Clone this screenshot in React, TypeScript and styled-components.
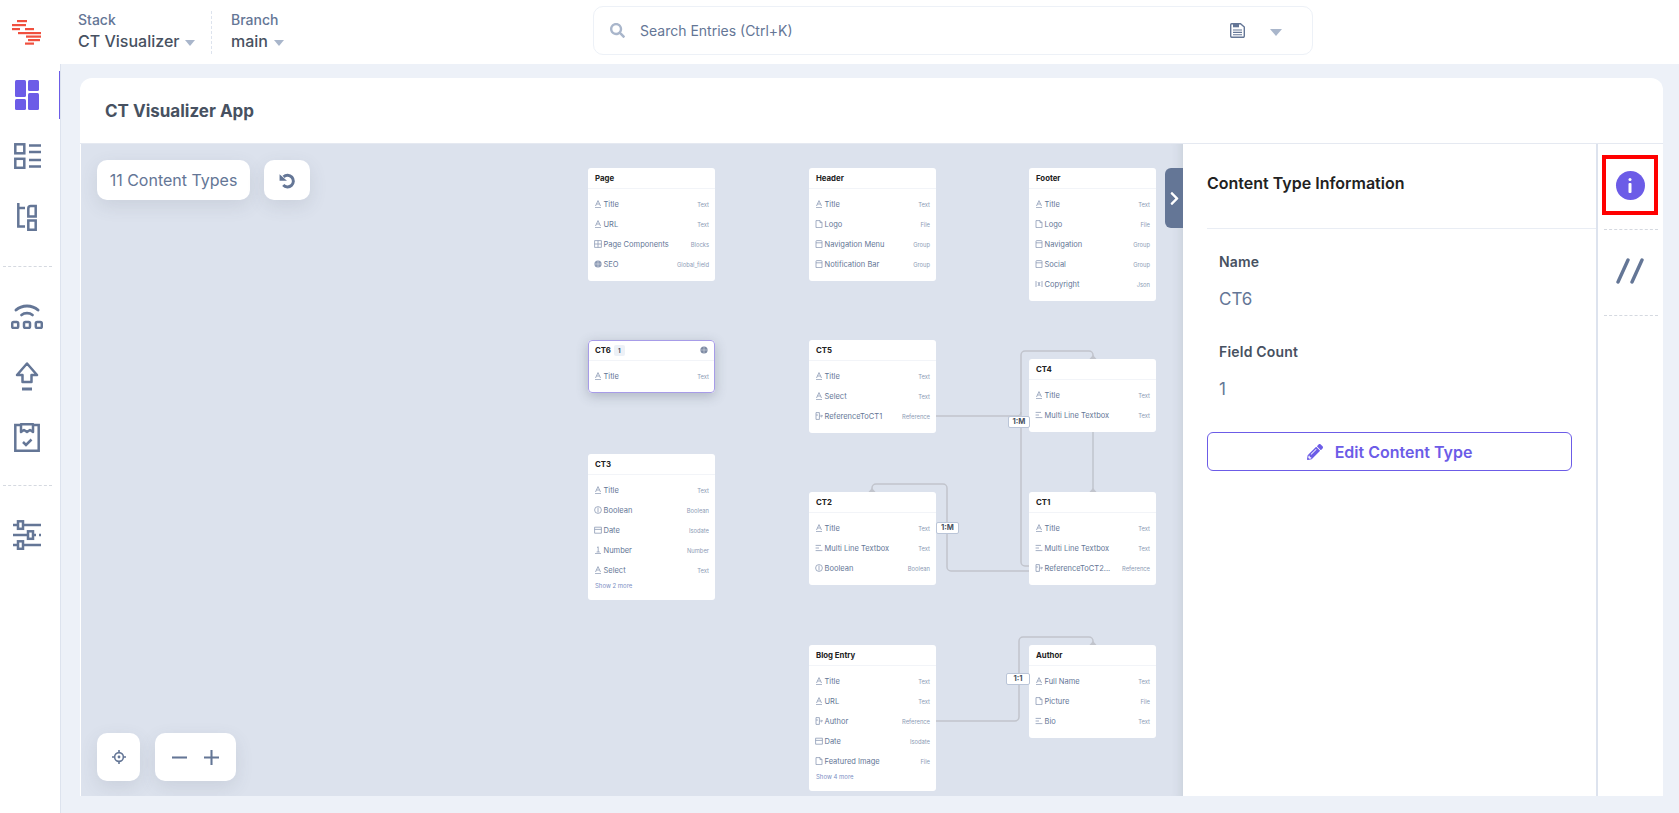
import React from "react";
import styled, { createGlobalStyle } from "styled-components";
import { FaSearch, FaPencilAlt, FaChevronRight } from "react-icons/fa";

const slate = "#647696";
const ink = "#475161";
const purple = "#6C5CE7";

const GlobalStyle = createGlobalStyle`
  html, body { margin: 0; padding: 0; height: 100%; overflow: hidden; }
  body { font-family: Inter, "Liberation Sans", sans-serif; background: #edf1f8; color: ${ink}; }
  #root { height: 100%; }
  * { box-sizing: border-box; }
`;

const Shell = styled.div`
  display: flex;
  flex-direction: column;
  width: 1679px;
  height: 813px;
`;

const TopBar = styled.header`
  display: flex;
  align-items: center;
  height: 64px;
  flex: none;
  background: #fff;
  position: relative;
`;

const LogoCell = styled.div`
  width: 78px;
  flex: none;
  padding-left: 12px;
  display: flex;
  align-items: center;
`;

const Picker = styled.div<{ $width: number }>`
  width: ${(p) => p.$width}px;
  flex: none;
  height: 43px;
  padding-bottom: 2px;
  display: flex;
  flex-direction: column;
  justify-content: center;
  gap: 3px;
`;

const PickerLabel = styled.span`
  font-size: 14px;
  line-height: 17px;
  font-weight: 500;
  color: ${slate};
`;

const PickerValue = styled.span`
  font-size: 16px;
  line-height: 20px;
  font-weight: 500;
  color: ${ink};
  display: flex;
  align-items: center;
  gap: 6px;
`;

const Caret = styled.i<{ $size?: number }>`
  display: inline-block;
  width: 0;
  height: 0;
  margin-top: 4px;
  border-left: ${(p) => p.$size ?? 5}px solid transparent;
  border-right: ${(p) => p.$size ?? 5}px solid transparent;
  border-top: ${(p) => (p.$size ?? 5) + 1}px solid #a9b6cb;
`;

const PickerRule = styled.div`
  width: 0;
  height: 43px;
  flex: none;
  border-left: 1px dashed #dde3ee;
  margin-right: 19px;
  margin-left: -1px;
`;

const SearchBox = styled.div`
  position: absolute;
  left: 593px;
  top: 6px;
  width: 720px;
  height: 49px;
  border: 1px solid #edf1f7;
  border-radius: 10px;
  display: flex;
  align-items: center;
  padding: 0 16px;
  color: #a9b6cb;
`;

const SearchText = styled.span`
  margin-left: 15px;
  font-size: 14px;
  color: ${slate};
  flex: 1;
`;

const SearchActions = styled.div`
  display: flex;
  align-items: center;
  gap: 25px;
  margin-right: 14px;
`;

const Body = styled.div`
  flex: 1;
  display: flex;
  min-height: 0;
`;

const Sidebar = styled.nav`
  width: 61px;
  flex: none;
  background: #fff;
  border-right: 1px solid #dde3ee;
  position: relative;
`;

const NavSlot = styled.div<{ $active?: boolean }>`
  height: 61px;
  display: flex;
  align-items: center;
  justify-content: center;
  width: 54px;
  position: relative;
  color: ${slate};
  ${(p) =>
    p.$active &&
    `&::after {
      content: "";
      position: absolute;
      right: -6px;
      top: 7px;
      height: 48px;
      width: 1px;
      background: ${purple};
    }`}
`;

const NavRule = styled.div<{ $top: number; $bottom: number }>`
  border-top: 1px dashed #d5d9e0;
  margin: ${(p) => p.$top}px 8px ${(p) => p.$bottom}px 3px;
`;

const Main = styled.main`
  flex: 1;
  padding: 14px 16px 17px 19px;
  min-width: 0;
`;

const Card = styled.section`
  height: 100%;
  background: #fff;
  border-radius: 12px 12px 0 0;
  display: flex;
  flex-direction: column;
  overflow: hidden;
`;

const CardTitle = styled.h1`
  margin: 0;
  height: 66px;
  flex: none;
  display: flex;
  align-items: center;
  padding-left: 25px;
  font-size: 17px;
  font-weight: 700;
  color: ${ink};
  border-bottom: 1px solid #e5e9f1;
`;

const Workspace = styled.div`
  flex: 1;
  display: flex;
  min-height: 0;
`;

const Canvas = styled.div`
  position: relative;
  flex: 1;
  margin-left: 1px;
  background: #dce2ed;
  box-shadow: inset -12px 0 12px -12px rgba(71, 81, 97, 0.18);
`;

const FloatBar = styled.div<{ $place: "top" | "bottom" }>`
  position: absolute;
  left: 16px;
  ${(p) => (p.$place === "top" ? "top: 16px;" : "bottom: 15px;")}
  display: flex;
  gap: ${(p) => (p.$place === "top" ? 14 : 15)}px;
`;

const FloatChip = styled.div<{ $width: number; $height: number }>`
  width: ${(p) => p.$width}px;
  height: ${(p) => p.$height}px;
  background: #fff;
  border-radius: 10px;
  display: flex;
  align-items: center;
  justify-content: space-evenly;
  font-size: 16px;
  color: ${slate};
  box-shadow: 0 6px 18px rgba(71, 81, 97, 0.12);
`;

const EdgeLayer = styled.svg`
  position: absolute;
  left: 0;
  top: 0;
  pointer-events: none;
`;

const EdgeTag = styled.div<{ $x: number; $y: number; $w: number }>`
  position: absolute;
  left: ${(p) => p.$x}px;
  top: ${(p) => p.$y}px;
  width: ${(p) => p.$w}px;
  height: 12px;
  background: #fff;
  border: 1px solid #bac5d8;
  border-radius: 2px;
  font-size: 7.6px;
  font-weight: 700;
  line-height: 10px;
  text-align: center;
  color: ${ink};
`;

const NodeCard = styled.div<{ $x: number; $y: number; $selected?: boolean }>`
  position: absolute;
  left: ${(p) => p.$x}px;
  top: ${(p) => p.$y}px;
  width: 127px;
  background: #fff;
  border-radius: 3px;
  padding-bottom: 7px;
  ${(p) =>
    p.$selected
      ? `outline: 1px solid #a79ce8; outline-offset: -1px; box-shadow: 0 3px 12px rgba(71, 81, 97, 0.3); border-radius: 4px;`
      : ``}
`;

const NodeHead = styled.div`
  height: 21px;
  display: flex;
  align-items: center;
  gap: 3px;
  padding: 0 6px 0 7px;
  font-size: 7.8px;
  font-weight: 700;
  color: #222;
  border-bottom: 1px solid #f2f4f8;
  margin-bottom: 5px;
`;

const NodeBadge = styled.span`
  width: 11px;
  height: 11px;
  background: #edf1f7;
  border-radius: 2px;
  font-size: 6px;
  display: flex;
  align-items: center;
  justify-content: center;
  color: ${ink};
`;

const NodeGear = styled.span`
  margin-left: auto;
  display: flex;
  margin-right: 1px;
  color: #7d8aa3;
`;

const FieldRow = styled.div`
  height: 20px;
  display: flex;
  align-items: center;
  padding: 0 6px 0 6px;
  font-size: 7.5px;
  color: ${slate};
`;

const FieldIcon = styled.span`
  width: 9.5px;
  flex: none;
  display: flex;
  color: #8d9bb5;
`;

const FieldName = styled.span`
  flex: 1;
  white-space: nowrap;
`;

const FieldType = styled.span`
  font-size: 5.8px;
  color: #8d9bb5;
`;

const ShowMore = styled.div`
  height: 13px;
  padding-left: 7px;
  font-size: 6px;
  line-height: 12px;
  color: #7d8fc4;
`;

const PanelToggle = styled.button`
  position: absolute;
  right: 0;
  top: 24px;
  width: 18px;
  height: 60px;
  border: 0;
  padding: 0;
  border-radius: 6px 0 0 6px;
  background: ${slate};
  color: #fff;
  display: flex;
  align-items: center;
  justify-content: center;
`;

const InfoPanel = styled.aside`
  width: 413px;
  flex: none;
  background: #fff;
  padding-left: 24px;
`;

const PanelTitle = styled.h2`
  margin: 0;
  height: 85px;
  padding-top: 27px;
  font-size: 16px;
  line-height: 24px;
  font-weight: 600;
  color: #222;
  border-bottom: 1px solid #e9edf4;
`;

const PanelBody = styled.div`
  padding: 23px 24px 0 12px;
`;

const InfoLabel = styled.div`
  font-size: 14px;
  line-height: 20px;
  font-weight: 600;
  letter-spacing: 0.2px;
  color: ${ink};
`;

const InfoValue = styled.div`
  font-size: 17px;
  line-height: 24px;
  margin-top: 15px;
  margin-bottom: 31px;
  color: ${slate};
`;

const EditButton = styled.button`
  margin-left: -12px;
  width: 365px;
  height: 39px;
  border: 1px solid ${purple};
  border-radius: 6px;
  background: #fff;
  display: flex;
  align-items: center;
  justify-content: center;
  gap: 12px;
  color: ${purple};
  font: 600 16px Inter, "Liberation Sans", sans-serif;
`;

const Rail = styled.aside`
  width: 67px;
  flex: none;
  background: #fff;
  border-left: 2px solid #dde3ee;
  padding: 11px 5px 0 4px;
`;

const RailMarked = styled.div`
  height: 60px;
  border: 4.5px solid #ff0000;
  display: flex;
  align-items: center;
  justify-content: center;
`;

const RailDot = styled.div`
  width: 29px;
  height: 29px;
  border-radius: 50%;
  background: ${purple};
  display: flex;
  align-items: center;
  justify-content: center;
`;

const RailRule = styled.div<{ $top: number }>`
  border-top: 1px dashed #d5d9e0;
  margin: ${(p) => p.$top}px 0 0 2px;
`;

const RailSlot = styled.div`
  height: 85px;
  padding-bottom: 4px;
  display: flex;
  align-items: center;
  justify-content: center;
`;

type FieldKind =
  | "text"
  | "file"
  | "group"
  | "blocks"
  | "global"
  | "reference"
  | "multi"
  | "boolean"
  | "date"
  | "number"
  | "json";

function FieldGlyph({ kind }: { kind: FieldKind }) {
  const common = {
    width: 8,
    height: 8,
    viewBox: "0 0 8 8",
    fill: "none",
    stroke: "currentColor",
    strokeWidth: 0.8,
  };
  switch (kind) {
    case "text":
      return (
        <svg {...common}>
          <path d="M1.5 6 4 .6 6.5 6M2.6 4h2.8M1 7.600h6" />
        </svg>
      );
    case "number":
      return (
        <svg {...common}>
          <path d="M3 1.600 4.200.8V6M2.600 6h3.200M1 7.600h6" />
        </svg>
      );
    case "file":
      return (
        <svg {...common}>
          <path d="M1 .6h4l2 2v5H1zM5 .6v2h2" />
        </svg>
      );
    case "group":
      return (
        <svg {...common}>
          <path d="M1 1.400a.8.8 0 0 1 .8-.8h4.400a.8.8 0 0 1 .8.8v6.200H1zM1 2.800h6" />
        </svg>
      );
    case "date":
      return (
        <svg {...common}>
          <path d="M.6 1.200h6.800v6H.6zM.6 3.400h6.800" />
        </svg>
      );
    case "blocks":
      return (
        <svg {...common}>
          <path d="M.6.6h6.800v6.800H.6zM4 .6v6.800M.6 4h6.800" />
        </svg>
      );
    case "global":
      return (
        <svg {...common} fill="currentColor" stroke="none">
          <circle cx="4" cy="4" r="3.600" />
          <path d="M1 4h6M4 1v6" stroke="#fff" strokeWidth={0.4} />
        </svg>
      );
    case "reference":
      return (
        <svg {...common}>
          <path d="M1 .6h3.400v6.800H1zM4.400 4h3M6.200 2.800 7.400 4 6.200 5.200M1 3h2" />
        </svg>
      );
    case "multi":
      return (
        <svg {...common}>
          <path d="M.6 1.400h5.400M.6 4h3.400M.6 6.600h6.800" />
        </svg>
      );
    case "boolean":
      return (
        <svg {...common}>
          <circle cx="4" cy="4" r="3.400" />
          <path d="M4 1.600v4.800" />
        </svg>
      );
    case "json":
      return (
        <svg {...common}>
          <path d="M1 1v6M7 1v6M3 2 4 4 3 6M5 2 4 4 5 6" />
        </svg>
      );
  }
}

type Field = [name: string, type: string, kind: FieldKind];

interface NodeSpec {
  title: string;
  x: number;
  y: number;
  fields: Field[];
  more?: string;
  selected?: boolean;
}

const nodes: NodeSpec[] = [
  {
    title: "Page",
    x: 507,
    y: 24,
    fields: [
      ["Title", "Text", "text"],
      ["URL", "Text", "text"],
      ["Page Components", "Blocks", "blocks"],
      ["SEO", "Global_field", "global"],
    ],
  },
  {
    title: "Header",
    x: 728,
    y: 24,
    fields: [
      ["Title", "Text", "text"],
      ["Logo", "File", "file"],
      ["Navigation Menu", "Group", "group"],
      ["Notification Bar", "Group", "group"],
    ],
  },
  {
    title: "Footer",
    x: 948,
    y: 24,
    fields: [
      ["Title", "Text", "text"],
      ["Logo", "File", "file"],
      ["Navigation", "Group", "group"],
      ["Social", "Group", "group"],
      ["Copyright", "Json", "json"],
    ],
  },
  {
    title: "CT6",
    x: 507,
    y: 196,
    selected: true,
    fields: [["Title", "Text", "text"]],
  },
  {
    title: "CT5",
    x: 728,
    y: 196,
    fields: [
      ["Title", "Text", "text"],
      ["Select", "Text", "text"],
      ["ReferenceToCT1", "Reference", "reference"],
    ],
  },
  {
    title: "CT4",
    x: 948,
    y: 215,
    fields: [
      ["Title", "Text", "text"],
      ["Multi Line Textbox", "Text", "multi"],
    ],
  },
  {
    title: "CT3",
    x: 507,
    y: 310,
    more: "Show 2 more",
    fields: [
      ["Title", "Text", "text"],
      ["Boolean", "Boolean", "boolean"],
      ["Date", "Isodate", "date"],
      ["Number", "Number", "number"],
      ["Select", "Text", "text"],
    ],
  },
  {
    title: "CT2",
    x: 728,
    y: 348,
    fields: [
      ["Title", "Text", "text"],
      ["Multi Line Textbox", "Text", "multi"],
      ["Boolean", "Boolean", "boolean"],
    ],
  },
  {
    title: "CT1",
    x: 948,
    y: 348,
    fields: [
      ["Title", "Text", "text"],
      ["Multi Line Textbox", "Text", "multi"],
      ["ReferenceToCT2...", "Reference", "reference"],
    ],
  },
  {
    title: "Blog Entry",
    x: 728,
    y: 501,
    more: "Show 4 more",
    fields: [
      ["Title", "Text", "text"],
      ["URL", "Text", "text"],
      ["Author", "Reference", "reference"],
      ["Date", "Isodate", "date"],
      ["Featured Image", "File", "file"],
    ],
  },
  {
    title: "Author",
    x: 948,
    y: 501,
    fields: [
      ["Full Name", "Text", "text"],
      ["Picture", "File", "file"],
      ["Bio", "Text", "multi"],
    ],
  },
];

// edge routes, in canvas coordinates
const edges = [
  "M855 272H936a4 4 0 0 0 4-4V211a4 4 0 0 1 4-4H1008a4 4 0 0 1 4 4V215",
  "M1012 288V348",
  "M940 268V418a4 4 0 0 0 4 4H948",
  "M791 348V344a4 4 0 0 1 4-4H862a4 4 0 0 1 4 4V423a4 4 0 0 0 4 4H948",
  "M855 577H934a4 4 0 0 0 4-4V497a4 4 0 0 1 4-4H1008a4 4 0 0 1 4 4V501",
];

const arrows = [
  [1012, 215],
  [1012, 348],
  [791, 348],
  [1012, 501],
];

function LogoMark() {
  return (
    <svg width="30" height="25" viewBox="0 0 30 25" fill="#f0503f">
      <rect x="5" y="0" width="10" height="2.200" />
      <rect x="0" y="4" width="14" height="2.200" />
      <rect x="0" y="8" width="8" height="2.200" />
      <rect x="13" y="8" width="9" height="2.200" />
      <rect x="6" y="12" width="23" height="2.200" />
      <rect x="14" y="15.500" width="15" height="2.200" />
      <rect x="16" y="19" width="12" height="2.200" />
      <rect x="13" y="22.500" width="9" height="2.200" />
    </svg>
  );
}

const navStroke = { fill: "none", stroke: "currentColor", strokeWidth: 2.5 };

const DashboardIcon = () => (
  <svg width="24" height="30" viewBox="0 0 24 30" fill={purple}>
    <rect x="0" y="0" width="11" height="17" rx="1.500" />
    <rect x="13" y="0" width="11" height="11" rx="1.500" />
    <rect x="0" y="19" width="11" height="11" rx="1.500" />
    <rect x="13" y="13" width="11" height="17" rx="1.500" />
  </svg>
);

const ListIcon = () => (
  <svg width="27" height="26" viewBox="0 0 27 26" {...navStroke}>
    <rect x="1.300" y="1.300" width="9" height="9" />
    <rect x="1.300" y="15.800" width="9" height="9" />
    <path d="M15 2.500h12M15 9h12M15 17h12M15 23.500h12" />
  </svg>
);

const TreeIcon = () => (
  <svg width="20" height="28" viewBox="0 0 20 28" {...navStroke}>
    <path d="M1.300 0v23.500H8M1.300 5H8" />
    <path d="M11.300 5.500a2.500 2.500 0 0 1 2.500-2.500h4.900v10.500h-7.400zM11.300 17.500h7.400v9.200h-7.400z" />
  </svg>
);

const ReleaseIcon = () => (
  <svg width="32" height="26" viewBox="0 0 32 26" {...navStroke}>
    <path d="M5 7C11 1.500 21 1.500 27 7" strokeLinecap="round" strokeWidth={3} />
    <path d="M10.500 12c3-2.400 8-2.400 11 0" strokeLinecap="round" strokeWidth={2.800} />
    <rect x="1.200" y="19" width="6" height="6" rx="1.400" />
    <rect x="13" y="19" width="6" height="6" rx="1.400" />
    <rect x="24.800" y="19" width="6" height="6" rx="1.400" />
  </svg>
);

const PublishIcon = () => (
  <svg width="24" height="29" viewBox="0 0 24 29" {...navStroke}>
    <path d="M12 1.500 22 13h-5.500v7h-9v-7H2z" strokeLinejoin="round" />
    <path d="M7 27h10" strokeWidth={3} />
  </svg>
);

const TaskIcon = () => (
  <svg width="26" height="29" viewBox="0 0 26 29" {...navStroke}>
    <path d="M7 2H1.300v25.700h23.400V2H19" />
    <path d="M7 1.300h12V9l-3-2-3 2-3-2-3 2z" strokeLinejoin="round" />
    <path d="M9 19l3 3 5.500-5.500" />
  </svg>
);

const SlidersIcon = () => (
  <svg width="28" height="30" viewBox="0 0 28 30" {...navStroke}>
    <path d="M0 5h4M11 5h17M0 15h14M21 15h2M26 15h2M0 25h4M11 25h17" />
    <rect x="5" y="1.300" width="5" height="7.500" />
    <rect x="15" y="11.300" width="5" height="7.500" />
    <rect x="5" y="21.300" width="5" height="7.500" />
  </svg>
);

const SaveIcon = () => (
  <svg width="15" height="15" viewBox="0 0 15 15" fill="none" stroke={slate} strokeWidth="1.400">
    <path d="M1.700.7h8.800l3.800 3.400v9a1.200 1.200 0 0 1-1.200 1.200H1.700A1.200 1.200 0 0 1 .7 13.100V1.900A1.200 1.200 0 0 1 1.700.7Z" />
    <path d="M3 1h6v3.300H3z" fill={slate} stroke="none" />
    <path d="M3 7h9M3 9.400h9M3 11.800h9" strokeWidth="1.100" />
  </svg>
);

const UndoIcon = () => (
  <svg width="17" height="17" viewBox="0 0 16 16" fill="none" stroke={slate} strokeWidth="2.800">
    <path d="M4.300 4.500A5.500 5.500 0 1 1 4 12.300" />
    <path d="M.5 2 7.500 8.300H.5z" fill={slate} stroke="none" />
  </svg>
);

const LocateIcon = () => (
  <svg width="14" height="14" viewBox="0 0 16 16" fill="none" stroke={slate} strokeWidth="1.800">
    <circle cx="8" cy="8" r="5" />
    <circle cx="8" cy="8" r="1.600" fill={slate} stroke="none" />
    <path d="M8 0v3M8 13v3M0 8h3M13 8h3" />
  </svg>
);

const ZoomGlyph = ({ plus }: { plus?: boolean }) => (
  <svg width="15" height="15" viewBox="0 0 16 16" stroke={slate} strokeWidth="2.200">
    <path d={plus ? "M0 8h16M8 0v16" : "M0 8h16"} />
  </svg>
);

function ContentNode({ node }: { node: NodeSpec }) {
  return (
    <NodeCard $x={node.x} $y={node.y} $selected={node.selected}>
      <NodeHead>
        {node.title}
        {node.selected && <NodeBadge>1</NodeBadge>}
        {node.selected && (
          <NodeGear>
            <FieldGlyph kind="global" />
          </NodeGear>
        )}
      </NodeHead>
      {node.fields.map(([name, type, kind]) => (
        <FieldRow key={name}>
          <FieldIcon>
            <FieldGlyph kind={kind} />
          </FieldIcon>
          <FieldName>{name}</FieldName>
          <FieldType>{type}</FieldType>
        </FieldRow>
      ))}
      {node.more && <ShowMore>{node.more}</ShowMore>}
    </NodeCard>
  );
}

export default function App() {
  return (
    <Shell>
      <GlobalStyle />
      <TopBar>
        <LogoCell>
          <LogoMark />
        </LogoCell>
        <Picker $width={134}>
          <PickerLabel>Stack</PickerLabel>
          <PickerValue>
            CT Visualizer <Caret />
          </PickerValue>
        </Picker>
        <PickerRule />
        <Picker $width={90}>
          <PickerLabel>Branch</PickerLabel>
          <PickerValue>
            main <Caret />
          </PickerValue>
        </Picker>
        <SearchBox>
          <FaSearch size={15} />
          <SearchText>Search Entries (Ctrl+K)</SearchText>
          <SearchActions>
            <SaveIcon />
            <Caret $size={6} />
          </SearchActions>
        </SearchBox>
      </TopBar>
      <Body>
        <Sidebar>
          <NavSlot $active>
            <DashboardIcon />
          </NavSlot>
          <NavSlot>
            <ListIcon />
          </NavSlot>
          <NavSlot>
            <TreeIcon />
          </NavSlot>
          <NavRule $top={19} $bottom={18} />
          <NavSlot>
            <ReleaseIcon />
          </NavSlot>
          <NavSlot>
            <PublishIcon />
          </NavSlot>
          <NavSlot>
            <TaskIcon />
          </NavSlot>
          <NavRule $top={17} $bottom={18} />
          <NavSlot>
            <SlidersIcon />
          </NavSlot>
        </Sidebar>
        <Main>
          <Card>
            <CardTitle>CT Visualizer App</CardTitle>
            <Workspace>
              <Canvas>
                <EdgeLayer width="1102" height="654">
                  <g fill="none" stroke="#c1c4cc" strokeWidth="1.500">
                    {edges.map((d) => (
                      <path key={d} d={d} />
                    ))}
                  </g>
                  {arrows.map(([x, y]) => (
                    <path key={`${x}-${y}`} d={`M${x - 3.5} ${y}L${x} ${y - 4}L${x + 3.5} ${y}Z`} fill="#c1c4cc" />
                  ))}
                </EdgeLayer>
                {nodes.map((n) => (
                  <ContentNode key={n.title} node={n} />
                ))}
                <EdgeTag $x={927} $y={272} $w={22}>
                  1:M
                </EdgeTag>
                <EdgeTag $x={855} $y={378} $w={23}>
                  1:M
                </EdgeTag>
                <EdgeTag $x={925} $y={529} $w={24}>
                  1:1
                </EdgeTag>
                <FloatBar $place="top">
                  <FloatChip $width={153} $height={40}>
                    11 Content Types
                  </FloatChip>
                  <FloatChip $width={46} $height={40}>
                    <UndoIcon />
                  </FloatChip>
                </FloatBar>
                <FloatBar $place="bottom">
                  <FloatChip $width={43} $height={48}>
                    <LocateIcon />
                  </FloatChip>
                  <FloatChip $width={81} $height={48}>
                    <ZoomGlyph />
                    <ZoomGlyph plus />
                  </FloatChip>
                </FloatBar>
                <PanelToggle>
                  <FaChevronRight size={15} />
                </PanelToggle>
              </Canvas>
              <InfoPanel>
                <PanelTitle>Content Type Information</PanelTitle>
                <PanelBody>
                  <InfoLabel>Name</InfoLabel>
                  <InfoValue>CT6</InfoValue>
                  <InfoLabel>Field Count</InfoLabel>
                  <InfoValue>1</InfoValue>
                  <EditButton>
                    <FaPencilAlt size={16} />
                    Edit Content Type
                  </EditButton>
                </PanelBody>
              </InfoPanel>
              <Rail>
                <RailMarked>
                  <RailDot>
                    <svg width="4" height="15" viewBox="0 0 4 15" fill="#fff">
                      <circle cx="2" cy="1.500" r="1.500" />
                      <rect x="0.500" y="5" width="3" height="10" rx="1" />
                    </svg>
                  </RailDot>
                </RailMarked>
                <RailRule $top={14} />
                <RailSlot>
                  <svg width="28" height="26" viewBox="0 0 28 26" stroke={slate} strokeWidth="3.400" strokeLinecap="round">
                    <path d="M12 2 2 24M26 2 16 24" />
                  </svg>
                </RailSlot>
                <RailRule $top={0} />
              </Rail>
            </Workspace>
          </Card>
        </Main>
      </Body>
    </Shell>
  );
}
